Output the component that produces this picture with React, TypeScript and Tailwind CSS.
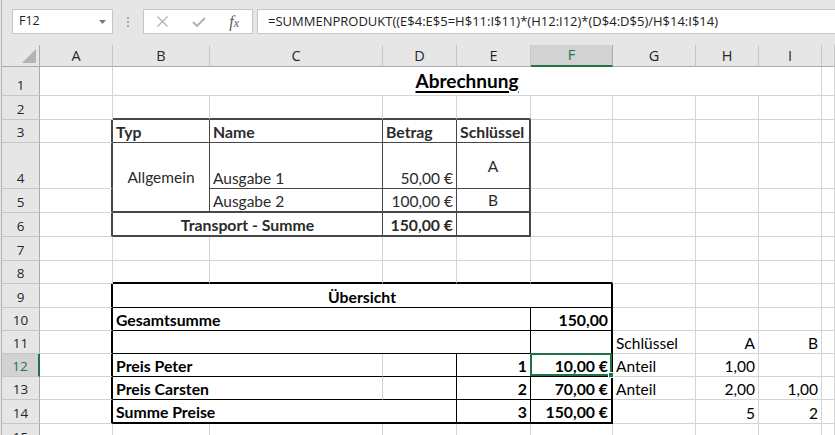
import React from 'react';

type BK = 'g' | 'd1' | 'd2' | 'k1' | 'k2' | 'n';
interface C {
  t?: string;
  s?: number;
  rs?: number;
  r?: BK;
  b?: BK;
  h?: 'l' | 'c' | 'r';
  v?: 'b' | 'c';
  f?: boolean;
  d?: boolean;
  sel?: boolean;
  title?: boolean;
}

const RC: Record<BK, string> = {
  g: 'border-r border-r-[#d4d4d4]',
  d1: 'border-r border-r-[#474747]',
  d2: 'border-r-2 border-r-[#474747]',
  k1: 'border-r border-r-black',
  k2: 'border-r-2 border-r-black',
  n: '',
};
const BCm: Record<BK, string> = {
  g: 'border-b border-b-[#d4d4d4]',
  d1: 'border-b border-b-[#474747]',
  d2: 'border-b-2 border-b-[#474747]',
  k1: 'border-b border-b-black',
  k2: 'border-b-2 border-b-black',
  n: '',
};
const SPAN: Record<number, string> = {
  1: '',
  2: 'col-span-2',
  3: 'col-span-3',
  4: 'col-span-4',
  5: 'col-span-5',
  8: 'col-span-8',
};
const RSPAN: Record<number, string> = { 1: '', 2: 'row-span-2' };
const HAL = { l: 'justify-start', c: 'justify-center', r: 'justify-end' };
const VAL = { b: 'items-end pb-[1.5px]', c: 'items-center' };

const blanks = (n: number): C[] => Array.from({ length: n }, () => ({}));

const T1 = true;

const rows: C[][] = [
  // 1
  [{}, { t: 'Abrechnung', s: 8, h: 'c', f: true, title: true }, {}],
  // 2
  [{}, { b: 'd2' }, { b: 'd2' }, { b: 'd2' }, { b: 'd2' }, ...blanks(5)],
  // 3
  [
    { r: 'd2' },
    { t: 'Typ', f: true, d: T1, r: 'd1', b: 'd1' },
    { t: 'Name', f: true, d: T1, r: 'd1', b: 'd1' },
    { t: 'Betrag', f: true, d: T1, r: 'd1', b: 'd1' },
    { t: 'Schlüssel', f: true, d: T1, r: 'd2', b: 'd1' },
    ...blanks(5),
  ],
  // 4
  [
    { r: 'd2' },
    { t: 'Allgemein', rs: 2, h: 'c', v: 'c', d: T1, r: 'd1', b: 'd2' },
    { t: 'Ausgabe 1', d: T1, r: 'd1', b: 'd1' },
    { t: '50,00 €', h: 'r', d: T1, r: 'd1', b: 'd1' },
    { t: 'A', h: 'c', v: 'c', d: T1, r: 'd2', b: 'd1' },
    ...blanks(5),
  ],
  // 5
  [
    { r: 'd2' },
    { t: 'Ausgabe 2', d: T1, r: 'd1', b: 'd2' },
    { t: '100,00 €', h: 'r', d: T1, r: 'd1', b: 'd2' },
    { t: 'B', h: 'c', v: 'c', d: T1, r: 'd2', b: 'd2' },
    ...blanks(5),
  ],
  // 6
  [
    { r: 'd2' },
    { t: 'Transport - Summe', s: 2, f: true, h: 'c', d: T1, r: 'd1', b: 'd2' },
    { t: '150,00 €', f: true, h: 'r', d: T1, r: 'd1', b: 'd2' },
    { r: 'd2', b: 'd2' },
    ...blanks(5),
  ],
  // 7
  blanks(10),
  // 8
  [{}, { b: 'k2' }, { b: 'k2' }, { b: 'k2' }, { b: 'k2' }, { b: 'k2' }, ...blanks(4)],
  // 9
  [{ r: 'k2' }, { t: 'Übersicht', s: 5, f: true, h: 'c', r: 'k2', b: 'k1' }, ...blanks(4)],
  // 10
  [
    { r: 'k2' },
    { t: 'Gesamtsumme', s: 4, f: true, r: 'k1', b: 'k1' },
    { t: '150,00', f: true, h: 'r', r: 'k2', b: 'k1' },
    ...blanks(4),
  ],
  // 11
  [
    { r: 'k2' },
    { s: 4, r: 'k1', b: 'k1' },
    { r: 'k2', b: 'k1' },
    { t: 'Schlüssel' },
    { t: 'A', h: 'r' },
    { t: 'B', h: 'r' },
    {},
  ],
  // 12
  [
    { r: 'k2' },
    { t: 'Preis Peter', s: 2, f: true, b: 'k1' },
    { r: 'k1', b: 'k1' },
    { t: '1', f: true, h: 'r', r: 'k1', b: 'k1' },
    { t: '10,00 €', f: true, h: 'r', r: 'k2', b: 'k1', sel: true },
    { t: 'Anteil' },
    { t: '1,00', h: 'r' },
    {},
    {},
  ],
  // 13
  [
    { r: 'k2' },
    { t: 'Preis Carsten', s: 2, f: true, b: 'k1' },
    { r: 'k1', b: 'k1' },
    { t: '2', f: true, h: 'r', r: 'k1', b: 'k1' },
    { t: '70,00 €', f: true, h: 'r', r: 'k2', b: 'k1' },
    { t: 'Anteil' },
    { t: '2,00', h: 'r' },
    { t: '1,00', h: 'r' },
    {},
  ],
  // 14
  [
    { r: 'k2' },
    { t: 'Summe Preise', s: 3, f: true, r: 'k1', b: 'k2' },
    { t: '3', f: true, h: 'r', r: 'k1', b: 'k2' },
    { t: '150,00 €', f: true, h: 'r', r: 'k2', b: 'k2' },
    {},
    { t: '5', h: 'r' },
    { t: '2', h: 'r' },
    {},
  ],
  // 15
  blanks(10),
];

const COLS = ['A', 'B', 'C', 'D', 'E', 'F', 'G', 'H', 'I', ''];

function Cell({ c }: { c: C }) {
  const cls = [
    'flex min-w-0 overflow-visible whitespace-nowrap px-[3px]',
    RC[c.r ?? 'g'],
    BCm[c.b ?? 'g'],
    SPAN[c.s ?? 1],
    RSPAN[c.rs ?? 1],
    HAL[c.h ?? 'l'],
    c.title ? 'items-end pb-[2.5px]' : VAL[c.v ?? 'b'],
    c.f ? 'font-bold' : '',
    c.d ? 'text-[#2b2b2b]' : 'text-black',
    c.title
      ? 'text-[19px] leading-[24px] underline decoration-[1.5px] underline-offset-[3px]'
      : c.f
      ? 'text-[15.8px] leading-[18px]'
      : 'text-[15.5px] leading-[18px]',
    c.sel ? 'relative' : '',
  ].join(' ');
  return (
    <div className={cls}>
      {c.t ? <span>{c.t}</span> : null}
      {c.sel ? (
        <>
          <div className="absolute -left-[1px] -top-[1px] -right-[1px] bottom-0 border-2 border-[#217346]" />
          <div className="absolute -right-[3px] -bottom-[2px] w-[6px] h-[6px] bg-[#217346] border border-white" />
        </>
      ) : null}
    </div>
  );
}

export default function App() {
  return (
    <div className="w-[835px] h-[435px] overflow-hidden bg-[#e6e6e6] pl-[1px]">
      <div className="h-full border-l border-l-[#b4b4b4] flex flex-col">
        {/* Formula bar */}
        <div className="h-[45px] shrink-0 flex items-start pt-[9px] pl-[10px] font-['Open_Sans',sans-serif]">
          <div className="w-[101px] h-[25px] bg-white border border-[#c6c6c6] flex items-center justify-between pl-[6px] pr-[6px]">
            <span className="text-[12.5px] text-[#222] leading-none">F12</span>
            <svg width="7" height="4" viewBox="0 0 7 4">
              <polygon points="0,0 7,0 3.5,4" fill="#7a7a7a" />
            </svg>
          </div>
          <div className="w-[30px] h-[25px] flex flex-col items-center justify-center gap-[2px]">
            <div className="w-[2px] h-[2px] bg-[#a8a8a8]" />
            <div className="w-[2px] h-[2px] bg-[#a8a8a8]" />
            <div className="w-[2px] h-[2px] bg-[#a8a8a8]" />
          </div>
          <div className="w-[110px] h-[25px] bg-white border border-[#c6c6c6] flex items-center pl-[1px]">
            <div className="w-[36px] flex justify-center">
              <svg width="11" height="11" viewBox="0 0 11 11">
                <path d="M0.5 0.5 L10.5 10.5 M10.5 0.5 L0.5 10.5" stroke="#b3b3b3" strokeWidth="1.3" />
              </svg>
            </div>
            <div className="w-[36px] flex justify-center">
              <svg width="14" height="10" viewBox="0 0 14 10">
                <path d="M1 5 L5 9 L13 1" stroke="#b3b3b3" strokeWidth="2" fill="none" />
              </svg>
            </div>
            <div className="w-[36px] flex justify-center">
              <span className="font-['Liberation_Serif',serif] italic text-[#5a5a5a] text-[16px] leading-none">
                f<span className="text-[12px]">x</span>
              </span>
            </div>
          </div>
          <div className="ml-[4px] flex-1 h-[25px] bg-white border border-r-0 border-[#c6c6c6] flex items-center pl-[10px]">
            <span className="text-[13px] text-[#222] whitespace-nowrap leading-none">
              =SUMMENPRODUKT((E$4:E$5=H$11:I$11)*(H12:I12)*(D$4:D$5)/H$14:I$14)
            </span>
          </div>
        </div>

        {/* Sheet */}
        <div className="grid grid-cols-[38px_73px_97px_173px_74px_74px_82px_83px_63px_63px_1fr] grid-rows-[22px_29px_24px_23px_46px_24px_24px_24px_23px_24px_23px_23px_23px_23px_24px_24px] bg-white font-['Lato','Liberation_Sans',sans-serif]">
          {/* header row */}
          <div className="bg-[#e6e6e6] border-r border-r-[#ababab] border-b border-b-[#ababab] flex items-end justify-end pr-[3px] pb-[3px]">
            <svg width="14" height="14" viewBox="0 0 14 14">
              <polygon points="14,0 14,14 0,14" fill="#b4b4b4" />
            </svg>
          </div>
          {COLS.map((l, i) =>
            l === 'F' ? (
              <div
                key={i}
                className="bg-[#d2d2d2] border-r border-r-[#ababab] border-b-2 border-b-[#217346] flex items-center justify-center font-['Open_Sans',sans-serif] text-[14.5px] text-[#217346]"
              >
                {l}
              </div>
            ) : (
              <div
                key={i}
                className="bg-[#e6e6e6] border-r border-r-[#c6c6c6] border-b border-b-[#ababab] flex items-center justify-center font-['Open_Sans',sans-serif] text-[14.5px] text-[#262626]"
              >
                {l}
              </div>
            )
          )}
          {rows.map((row, ri) => (
            <React.Fragment key={ri}>
              {ri === 11 ? (
                <div className="bg-[#d2d2d2] border-r-2 border-r-[#217346] border-b border-b-[#c6c6c6] flex items-end justify-center pb-[1px] font-['Open_Sans',sans-serif] text-[13.5px] leading-[17px] text-[#217346]">
                  {ri + 1}
                </div>
              ) : (
                <div className="bg-[#e6e6e6] border-r border-r-[#ababab] border-b border-b-[#c6c6c6] flex items-end justify-center pb-[1px] font-['Open_Sans',sans-serif] text-[13.5px] leading-[17px] text-[#262626]">
                  {ri + 1}
                </div>
              )}
              {row.map((c, ci) => (
                <Cell key={ci} c={c} />
              ))}
            </React.Fragment>
          ))}
        </div>
      </div>
    </div>
  );
}
